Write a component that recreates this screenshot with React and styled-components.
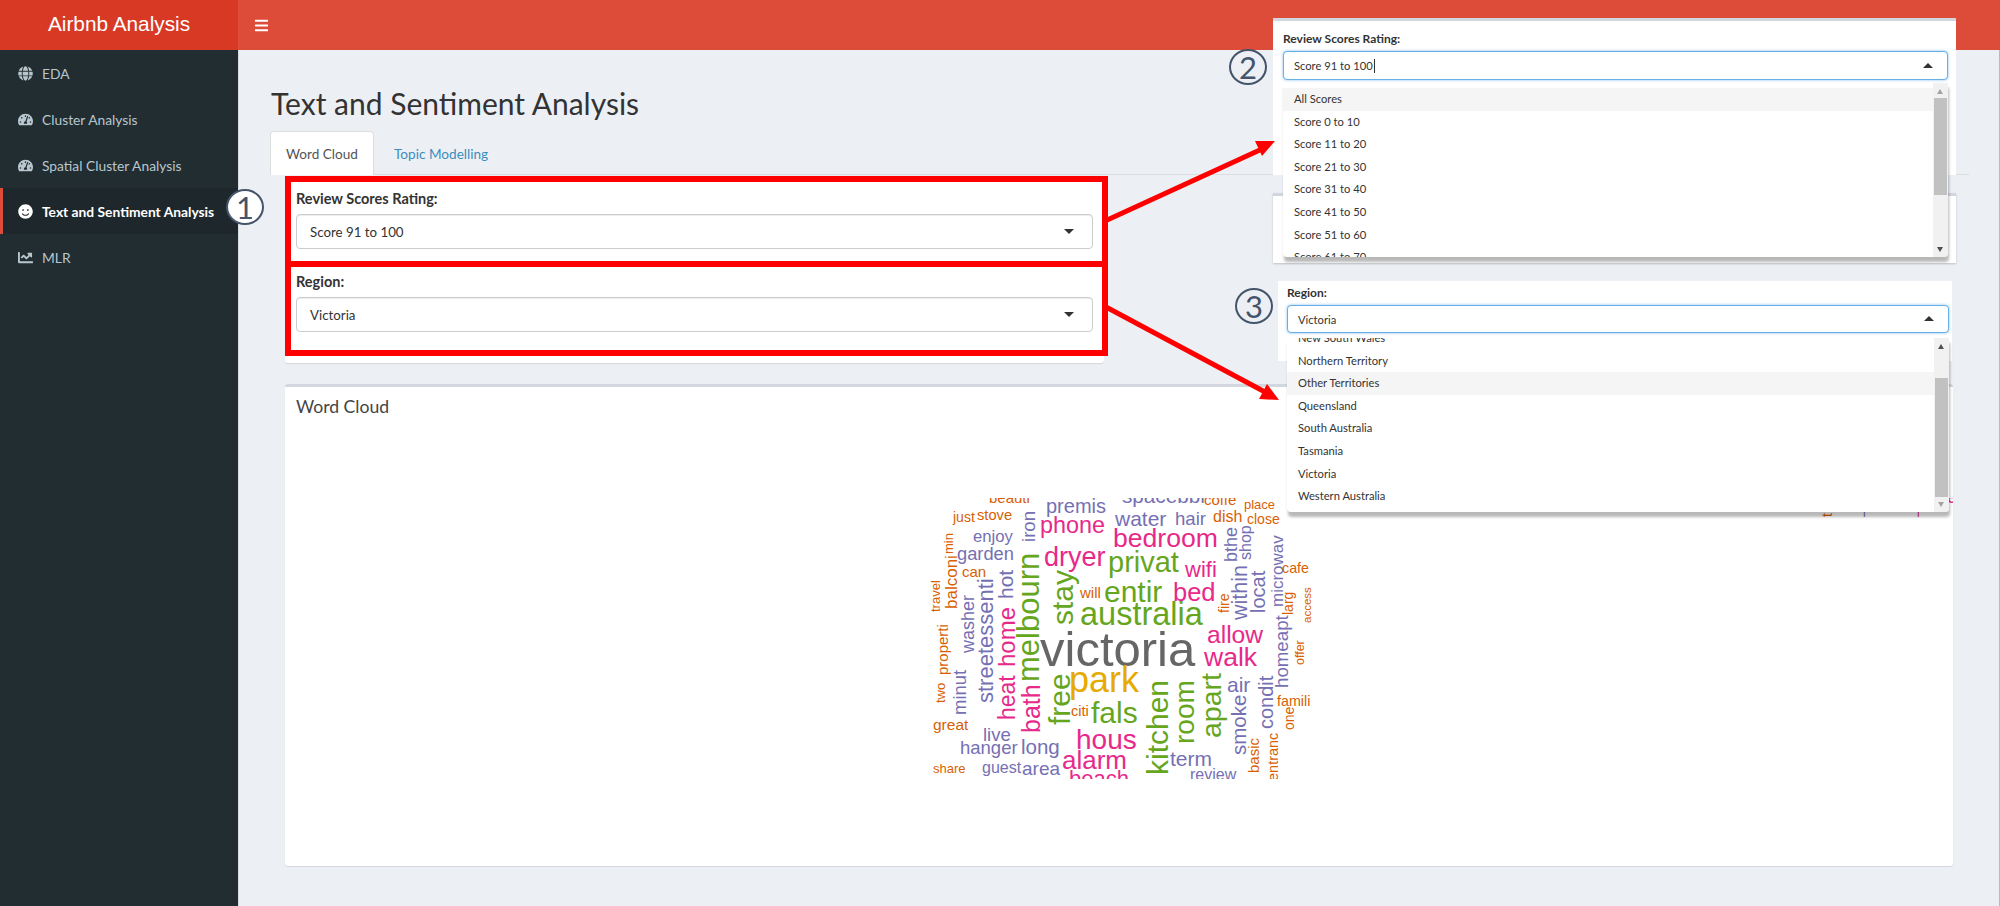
import React from 'react';
import styled, { createGlobalStyle } from 'styled-components';
import { FaBars, FaGlobe, FaTachometerAlt, FaSmile, FaChartLine } from 'react-icons/fa';

const UI_FONT = '"Lato", "Open Sans", sans-serif';

const GlobalStyle = createGlobalStyle`
	html, body {
		margin: 0;
		padding: 0;
		background: #ecf0f5;
		font-family: ${UI_FONT};
		color: #333;
	}
	* {
		box-sizing: border-box;
	}
`;

const Page = styled.div`
	position: relative;
	width: 2000px;
	height: 906px;
	overflow: hidden;
	display: flex;
	flex-direction: column;
`;

const Header = styled.header`
	display: flex;
	height: 50px;
	flex: none;
	background: #dd4b39;
`;

const Logo = styled.div`
	width: 238px;
	background: #d73925;
	color: #fff;
	font-family: "Liberation Sans", Arial, sans-serif;
	font-size: 20.8px;
	line-height: 48px;
	text-align: center;
`;

const Toggle = styled.div`
	display: flex;
	align-items: center;
	padding-left: 16px;
	color: #fff;
	font-size: 15px;
`;

const Body = styled.div`
	display: flex;
	flex: 1;
	min-height: 0;
`;

const Sidebar = styled.nav`
	width: 239px;
	flex: none;
	background: #222d32;
	border-right: 1px solid #d8dde3;
`;

const MenuItem = styled.div`
	display: flex;
	align-items: center;
	height: 46px;
	padding-left: ${(p) => (p.$active ? '14px' : '17px')};
	gap: 8px;
	font-size: 13.8px;
	font-weight: ${(p) => (p.$active ? 700 : 400)};
	color: ${(p) => (p.$active ? '#fff' : '#b8c7ce')};
	background: ${(p) => (p.$active ? '#1e282c' : 'transparent')};
	border-left: ${(p) => (p.$active ? '3px solid #dd4b39' : '0')};
`;

const MenuIcon = styled.span`
	display: flex;
	justify-content: center;
	width: 17px;
	font-size: 15px;
`;

const Main = styled.main`
	flex: 1;
	min-width: 0;
	padding-right: 30px;
	border-right: 1px solid #a9bcd9;
`;

const Title = styled.h2`
	margin: 31px 0 6px 32px;
	height: 44px;
	font-size: 30px;
	font-weight: 400;
	line-height: 44px;
	color: #333;
`;

const TabBar = styled.div`
	display: flex;
	height: 44px;
	margin-left: 31px;
	border-bottom: 1px solid #ddd;
`;

const Tab = styled.div`
	height: 44px;
	padding: 0 15px;
	font-size: 13.6px;
	line-height: 44px;
	color: ${(p) => (p.$active ? '#555' : '#3c8dbc')};
	background: ${(p) => (p.$active ? '#fff' : 'transparent')};
	border: 1px solid ${(p) => (p.$active ? '#ddd' : 'transparent')};
	border-bottom: 0;
	border-radius: 4px 4px 0 0;
	margin-right: 4px;
`;

const TabPane = styled.div`
	padding: 1px 16px 0 46px;
`;

const FilterBox = styled.section`
	width: 819px;
	height: 187px;
	margin-bottom: 21px;
	background: #fff;
	border-radius: 3px;
	box-shadow: 0 1px 1px rgba(0, 0, 0, 0.1);
`;

const RedFrame = styled.div`
	height: ${(p) => p.$height}px;
	margin: ${(p) => p.$overlap}px -4px 0 0;
	padding: ${(p) => p.$padTop}px 9px 0 5px;
	border: 6px solid #f00;
`;

const FieldLabel = styled.label`
	display: block;
	font-weight: 700;
	color: #333;
	font-size: ${(p) => (p.$small ? '12px' : '14.5px')};
	line-height: ${(p) => (p.$small ? '14px' : '16px')};
	margin-bottom: ${(p) => (p.$small ? '5px' : '7px')};
`;

const SelectBox = styled.div`
	position: relative;
	display: flex;
	align-items: center;
	height: ${(p) => p.$height}px;
	padding-left: ${(p) => (p.$small ? '10px' : '13px')};
	background: #fff;
	font-size: ${(p) => (p.$small ? '11.2px' : '13.3px')};
	color: #333;
	border: 1px solid ${(p) => (p.$focus ? '#66afe9' : '#ccc')};
	border-radius: 4px;
	box-shadow: ${(p) =>
		p.$focus ? '0 0 3px rgba(102, 175, 233, 0.8)' : 'inset 0 1px 1px rgba(0, 0, 0, 0.075)'};
`;

const Caret = styled.span`
	position: absolute;
	top: 50%;
	right: ${(p) => (p.$up ? '14px' : '18px')};
	margin-top: -3px;
	width: 0;
	height: 0;
	border-left: 5px solid transparent;
	border-right: 5px solid transparent;
	border-top: ${(p) => (p.$up ? '0' : '5px solid #333')};
	border-bottom: ${(p) => (p.$up ? '5px solid #333' : '0')};
`;

const TextCursor = styled.span`
	width: 1px;
	height: 14px;
	margin-left: 1px;
	background: #333;
`;

const Card = styled.section`
	height: 482px;
	background: #fff;
	border-top: 3px solid #d2d6de;
	border-radius: 3px;
	box-shadow: 0 1px 1px rgba(0, 0, 0, 0.1);
`;

const CardTitle = styled.h3`
	margin: 0;
	padding: 10px 11px;
	height: 111px;
	font-size: 17.6px;
	font-weight: 400;
	line-height: 20px;
	color: #444;
`;

const CloudSvg = styled.svg`
	display: block;
	font-family: "Liberation Sans", Arial, sans-serif;
`;

/* the two pasted screenshots of the open dropdowns, lying over the page */
const Shot = styled.div`
	position: absolute;
	left: ${(p) => p.$left}px;
	top: ${(p) => p.$top}px;
	width: ${(p) => p.$width}px;
	z-index: 2;
`;

const ShotPart = styled.div`
	background: #fff;
	border-top: ${(p) => (p.$border ? '3px solid #d2d6de' : '0')};
	height: ${(p) => p.$height}px;
	margin-top: ${(p) => p.$gap}px;
	padding: ${(p) => p.$pad};
	box-shadow: ${(p) => (p.$shadow ? '0 1px 2px rgba(0, 0, 0, 0.2)' : 'none')};
`;

const Dropdown = styled.div`
	position: absolute;
	left: ${(p) => p.$left}px;
	top: ${(p) => p.$top}px;
	width: ${(p) => p.$width}px;
	height: 174px;
	overflow: hidden;
	background: #fff;
	border-radius: 0 0 4px 4px;
	box-shadow: 1px 5px 3px rgba(0, 0, 0, 0.28);
	z-index: 3;
`;

const OptionList = styled.div`
	margin-top: ${(p) => p.$offset}px;
`;

const Option = styled.div`
	height: 22.6px;
	padding-left: 11px;
	font-size: 11.2px;
	line-height: 22.6px;
	color: #333;
	background: ${(p) => (p.$hover ? '#f5f5f5' : 'transparent')};
`;

const ScrollTrack = styled.div`
	position: absolute;
	top: 0;
	right: 0;
	bottom: 0;
	width: 15px;
	background: #f1f1f1;
`;

const ScrollThumb = styled.div`
	position: absolute;
	left: 1px;
	right: 1px;
	top: ${(p) => p.$top}px;
	height: ${(p) => p.$height}px;
	background: #c1c1c1;
`;

const ScrollArrow = styled.span`
	position: absolute;
	left: 4px;
	${(p) => (p.$down ? 'bottom: 5px;' : 'top: 6px;')}
	width: 0;
	height: 0;
	border-left: 3.5px solid transparent;
	border-right: 3.5px solid transparent;
	border-top: ${(p) => (p.$down ? `5px solid ${p.$color}` : '0')};
	border-bottom: ${(p) => (p.$down ? '0' : `5px solid ${p.$color}`)};
`;

const Badge = styled.div`
	position: absolute;
	left: ${(p) => p.$left}px;
	top: ${(p) => p.$top}px;
	width: 38px;
	height: 36px;
	display: flex;
	align-items: center;
	justify-content: center;
	border: 2px solid #44546a;
	border-radius: 50%;
	background: ${(p) => (p.$filled ? '#fff' : 'transparent')};
	color: #44546a;
	font-family: "Lato", sans-serif;
	font-weight: 400;
	font-size: 31px;
	line-height: 1;
	z-index: 4;
`;

const ArrowLayer = styled.svg`
	position: absolute;
	left: 0;
	top: 0;
	pointer-events: none;
	z-index: 5;
`;

const GREEN = '#66a61e';
const PINK = '#e7298a';
const PURPLE = '#7570b3';
const ORANGE = '#d95f02';

// [text, x, baseline y, size, colour, rotated] in page coordinates
const WORDS = [
	['victoria', 1040, 666, 49, '#666666'],
	['park', 1069, 692, 36, '#e6ab02'],
	['australia', 1080, 625, 32.5, GREEN],
	['entir', 1104, 602, 30, GREEN],
	['privat', 1108, 572, 29, GREEN],
	['fals', 1091, 723, 30, GREEN],
	['melbourn', 1039, 682, 31, GREEN, true],
	['stay', 1073, 625, 30, GREEN, true],
	['free', 1070, 725, 30, GREEN, true],
	['kitchen', 1168, 775, 30, GREEN, true],
	['room', 1194, 744, 28, GREEN, true],
	['apart', 1221, 738, 28.5, GREEN, true],
	['bedroom', 1113, 547, 26.6, PINK],
	['phone', 1040, 533, 23.4, PINK],
	['dryer', 1044, 566, 27, PINK],
	['bed', 1173, 601, 25.5, PINK],
	['wifi', 1185, 577, 22, PINK],
	['allow', 1207, 643, 24.6, PINK],
	['walk', 1204, 666, 26.5, PINK],
	['hous', 1076, 749, 28, PINK],
	['alarm', 1062, 769, 26, PINK],
	['beach', 1069, 786, 22, PINK],
	['home', 1015, 667, 24, PINK, true],
	['heat', 1015, 720, 23, PINK, true],
	['bath', 1040, 733, 25, PINK, true],
	['hot', 1013, 599, 21, PURPLE, true],
	['premis', 1046, 513, 20, PURPLE],
	['spacebbr', 1122, 503, 20.7, PURPLE],
	['water', 1115, 526, 21, PURPLE],
	['hair', 1175, 525, 18.6, PURPLE],
	['enjoy', 973, 542, 16.7, PURPLE],
	['garden', 957, 560, 18.3, PURPLE],
	['live', 983, 741, 18.5, PURPLE],
	['hanger', 960, 754, 18.5, PURPLE],
	['long', 1021, 754, 20.5, PURPLE],
	['guest', 982, 773, 16, PURPLE],
	['area', 1022, 775, 19, PURPLE],
	['term', 1170, 766, 21, PURPLE],
	['review', 1190, 780, 16, PURPLE],
	['air', 1227, 692, 21, PURPLE],
	['iron', 1035, 542, 18.6, PURPLE, true],
	['washer', 974, 653, 18, PURPLE, true],
	['streetessenti', 993, 703, 22, PURPLE, true],
	['minut', 966, 715, 18.5, PURPLE, true],
	['bthe', 1237, 562, 18, PURPLE, true],
	['shop', 1251, 560, 16, PURPLE, true],
	['within', 1247, 620, 21.5, PURPLE, true],
	['locat', 1265, 613, 20, PURPLE, true],
	['microwav', 1283, 607, 17, PURPLE, true],
	['homeapt', 1288, 688, 18.7, PURPLE, true],
	['smoke', 1246, 755, 20.5, PURPLE, true],
	['condit', 1273, 729, 20, PURPLE, true],
	['beauti', 989, 503, 15, ORANGE],
	['just', 953, 522, 14, ORANGE],
	['stove', 977, 520, 14.7, ORANGE],
	['can', 962, 577, 15, ORANGE],
	['will', 1080, 598, 15, ORANGE],
	['great', 933, 730, 15.5, ORANGE],
	['citi', 1071, 716, 14.5, ORANGE],
	['share', 933, 773, 13, ORANGE],
	['coffe', 1204, 505, 15, ORANGE],
	['dish', 1213, 522, 16, ORANGE],
	['place', 1244, 509, 13, ORANGE],
	['close', 1247, 524, 14, ORANGE],
	['cafe', 1282, 573, 14.3, ORANGE],
	['famili', 1277, 706, 14.3, ORANGE],
	['min', 953, 554, 13, ORANGE, true],
	['balconi', 957, 609, 17, ORANGE, true],
	['travel', 940, 612, 13, ORANGE, true],
	['properti', 948, 675, 15, ORANGE, true],
	['two', 945, 703, 13, ORANGE, true],
	['fire', 1229, 613, 14, ORANGE, true],
	['larg', 1293, 615, 14, ORANGE, true],
	['access', 1311, 623, 11.5, ORANGE, true],
	['one', 1294, 730, 14, ORANGE, true],
	['offer', 1304, 665, 12.5, ORANGE, true],
	['basic', 1259, 773, 15, ORANGE, true],
	['entranc', 1278, 781, 14.5, ORANGE, true],
	// second cloud, nearly all of it under the open dropdown
	['t', 1832, 517, 14, ORANGE, true],
	['l', 1863, 517, 12, PURPLE],
	['l', 1917, 517, 12, PINK],
	['l', 1949, 486, 12, PURPLE],
	['e', 1947, 503, 18, PINK],
];

const SCORES = [
	'All Scores',
	'Score 0 to 10',
	'Score 11 to 20',
	'Score 21 to 30',
	'Score 31 to 40',
	'Score 41 to 50',
	'Score 51 to 60',
	'Score 61 to 70',
];

const REGIONS = [
	'New South Wales',
	'Northern Territory',
	'Other Territories',
	'Queensland',
	'South Australia',
	'Tasmania',
	'Victoria',
	'Western Australia',
];

const MENU = [
	{ label: 'EDA', icon: <FaGlobe /> },
	{ label: 'Cluster Analysis', icon: <FaTachometerAlt /> },
	{ label: 'Spatial Cluster Analysis', icon: <FaTachometerAlt /> },
	{ label: 'Text and Sentiment Analysis', icon: <FaSmile />, active: true },
	{ label: 'MLR', icon: <FaChartLine /> },
];

const WordCloud = () => (
	<CloudSvg width="1668" height="281" viewBox="285 498 1668 281">
		{WORDS.map(([text, x, y, size, fill, rotated]) => (
			<text
				key={`${text}-${x}`}
				x={x}
				y={y}
				fontSize={size}
				fill={fill}
				transform={rotated ? `rotate(-90 ${x} ${y})` : undefined}
			>
				{text}
			</text>
		))}
	</CloudSvg>
);

const OpenList = ({ left, top, width, offset, options, hover, thumbTop, thumbHeight, upColor, downColor }) => (
	<Dropdown $left={left} $top={top} $width={width}>
		<OptionList $offset={offset}>
			{options.map((o) => (
				<Option key={o} $hover={o === hover}>
					{o}
				</Option>
			))}
		</OptionList>
		<ScrollTrack>
			<ScrollArrow $color={upColor} />
			<ScrollThumb $top={thumbTop} $height={thumbHeight} />
			<ScrollArrow $down $color={downColor} />
		</ScrollTrack>
	</Dropdown>
);

const App = () => (
	<Page>
		<GlobalStyle />
		<Header>
			<Logo>Airbnb Analysis</Logo>
			<Toggle>
				<FaBars />
			</Toggle>
		</Header>
		<Body>
			<Sidebar>
				{MENU.map((m) => (
					<MenuItem key={m.label} $active={m.active}>
						<MenuIcon>{m.icon}</MenuIcon>
						{m.label}
					</MenuItem>
				))}
			</Sidebar>
			<Main>
				<Title>Text and Sentiment Analysis</Title>
				<TabBar>
					<Tab $active>Word Cloud</Tab>
					<Tab>Topic Modelling</Tab>
				</TabBar>
				<TabPane>
					<FilterBox>
						<RedFrame $height={91} $overlap={0} $padTop={9}>
							<FieldLabel>Review Scores Rating:</FieldLabel>
							<SelectBox $height={35}>
								Score 91 to 100
								<Caret />
							</SelectBox>
						</RedFrame>
						<RedFrame $height={95} $overlap={-6} $padTop={7}>
							<FieldLabel>Region:</FieldLabel>
							<SelectBox $height={35}>
								Victoria
								<Caret />
							</SelectBox>
						</RedFrame>
					</FilterBox>
					<Card>
						<CardTitle>Word Cloud</CardTitle>
						<WordCloud />
					</Card>
				</TabPane>
			</Main>
		</Body>

		<Shot $left={1273} $top={18} $width={683}>
			<ShotPart $height={157} $gap={0} $border $pad="11px 8px 0 10px">
				<FieldLabel $small>Review Scores Rating:</FieldLabel>
				<SelectBox $small $focus $height={29}>
					Score 91 to 100
					<TextCursor />
					<Caret $up />
				</SelectBox>
			</ShotPart>
			<ShotPart $height={70} $gap={18} $border $shadow $pad="0" />
			<OpenList
				left={10}
				top={65}
				width={665}
				offset={5}
				options={SCORES}
				hover="All Scores"
				thumbTop={15}
				thumbHeight={97}
				upColor="#a3a3a3"
				downColor="#505050"
			/>
		</Shot>

		<Shot $left={1278} $top={281} $width={674}>
			<ShotPart $height={80} $gap={0} $pad="5px 3px 0 9px">
				<FieldLabel $small>Region:</FieldLabel>
				<SelectBox $small $focus $height={28}>
					Victoria
					<Caret $up />
				</SelectBox>
			</ShotPart>
			<OpenList
				left={9}
				top={57}
				width={662}
				offset={-11}
				options={REGIONS}
				hover="Other Territories"
				thumbTop={40}
				thumbHeight={119}
				upColor="#505050"
				downColor="#a3a3a3"
			/>
		</Shot>

		<Badge $filled $left={226} $top={189}>1</Badge>
		<Badge $left={1229} $top={49}>2</Badge>
		<Badge $left={1235} $top={288}>3</Badge>

		<ArrowLayer width="2000" height="906">
			<line x1="1105" y1="221" x2="1262" y2="149" stroke="#f00" strokeWidth="5" />
			<polygon points="1275,141 1262,156 1255,141" fill="#f00" />
			<line x1="1106" y1="307" x2="1265" y2="392" stroke="#f00" strokeWidth="5" />
			<polygon points="1279,400 1259,399 1267,384" fill="#f00" />
		</ArrowLayer>
	</Page>
);

export default App;
